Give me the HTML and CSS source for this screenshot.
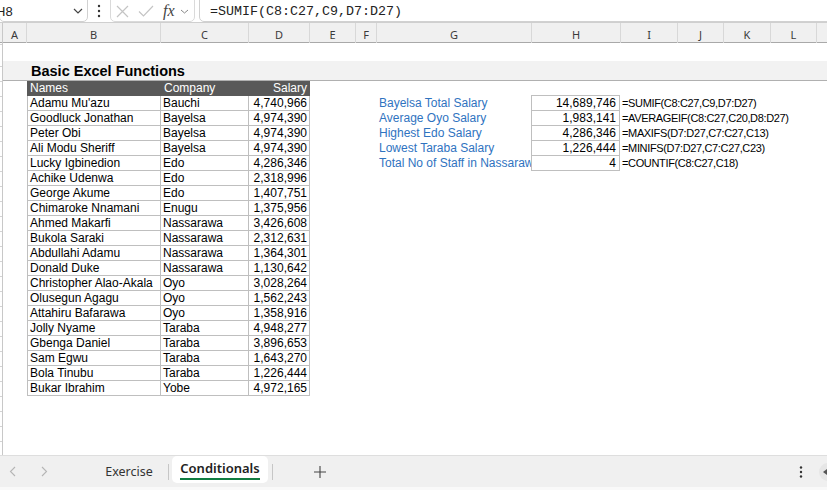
FILE: index.html
```html
<!DOCTYPE html>
<html>
<head>
<meta charset="utf-8">
<title>Conditionals</title>
<link rel="stylesheet" href="styles.css">
</head>
<body>
<div class="app">
  <div class="fbar">
    <div class="namebox">
      <span class="ref">H8</span>
      <svg class="chev" width="10" height="6" viewBox="0 0 10 6"><path d="M1 1 L5 5 L9 1" fill="none" stroke="#444" stroke-width="1.2"/></svg>
    </div>
    <div class="kebab">
      <svg width="4" height="14" viewBox="0 0 4 14"><circle cx="2" cy="2" r="1.2" fill="#333"/><circle cx="2" cy="7" r="1.2" fill="#333"/><circle cx="2" cy="12" r="1.2" fill="#333"/></svg>
    </div>
    <div class="fbtns">
      <svg width="13" height="13" viewBox="0 0 13 13"><path d="M1 1 L12 12 M12 1 L1 12" stroke="#c4c4c4" stroke-width="1.2" fill="none"/></svg>
      <svg width="16" height="12" viewBox="0 0 16 12"><path d="M1 6.5 L5.5 11 L15 1" stroke="#c4c4c4" stroke-width="1.2" fill="none"/></svg>
      <span class="fx">fx</span>
      <svg width="9" height="5" viewBox="0 0 9 5"><path d="M1 1 L4.5 4 L8 1" fill="none" stroke="#888" stroke-width="1"/></svg>
    </div>
    <div class="formula">=SUMIF(C8:C27,C9,D7:D27)</div>
  </div>

  <div class="colhdr">
    <div class="ch corner"></div>
    <div class="ch">A</div>
    <div class="ch">B</div>
    <div class="ch">C</div>
    <div class="ch">D</div>
    <div class="ch">E</div>
    <div class="ch">F</div>
    <div class="ch">G</div>
    <div class="ch">H</div>
    <div class="ch">I</div>
    <div class="ch">J</div>
    <div class="ch">K</div>
    <div class="ch">L</div>
    <div class="ch last"></div>
  </div>

  <div class="sheet">
    <div class="rowhdr"></div>
    <div class="cells">
      <div class="spacer"></div>
      <div class="titleband">Basic Excel Functions</div>
      <div class="content">
        <div class="tbl">
          <div class="h">Names</div><div class="h">Company</div><div class="h num">Salary</div>
          <div class="c n">Adamu Mu'azu</div><div class="c">Bauchi</div><div class="c num">4,740,966</div>
          <div class="c n">Goodluck Jonathan</div><div class="c">Bayelsa</div><div class="c num">4,974,390</div>
          <div class="c n">Peter Obi</div><div class="c">Bayelsa</div><div class="c num">4,974,390</div>
          <div class="c n">Ali Modu Sheriff</div><div class="c">Bayelsa</div><div class="c num">4,974,390</div>
          <div class="c n">Lucky Igbinedion</div><div class="c">Edo</div><div class="c num">4,286,346</div>
          <div class="c n">Achike Udenwa</div><div class="c">Edo</div><div class="c num">2,318,996</div>
          <div class="c n">George Akume</div><div class="c">Edo</div><div class="c num">1,407,751</div>
          <div class="c n">Chimaroke Nnamani</div><div class="c">Enugu</div><div class="c num">1,375,956</div>
          <div class="c n">Ahmed Makarfi</div><div class="c">Nassarawa</div><div class="c num">3,426,608</div>
          <div class="c n">Bukola Saraki</div><div class="c">Nassarawa</div><div class="c num">2,312,631</div>
          <div class="c n">Abdullahi Adamu</div><div class="c">Nassarawa</div><div class="c num">1,364,301</div>
          <div class="c n">Donald Duke</div><div class="c">Nassarawa</div><div class="c num">1,130,642</div>
          <div class="c n">Christopher Alao-Akala</div><div class="c">Oyo</div><div class="c num">3,028,264</div>
          <div class="c n">Olusegun Agagu</div><div class="c">Oyo</div><div class="c num">1,562,243</div>
          <div class="c n">Attahiru Bafarawa</div><div class="c">Oyo</div><div class="c num">1,358,916</div>
          <div class="c n">Jolly Nyame</div><div class="c">Taraba</div><div class="c num">4,948,277</div>
          <div class="c n">Gbenga Daniel</div><div class="c">Taraba</div><div class="c num">3,896,653</div>
          <div class="c n">Sam Egwu</div><div class="c">Taraba</div><div class="c num">1,643,270</div>
          <div class="c n">Bola Tinubu</div><div class="c">Taraba</div><div class="c num">1,226,444</div>
          <div class="c n">Bukar Ibrahim</div><div class="c">Yobe</div><div class="c num">4,972,165</div>
        </div>

        <div class="summary">
          <div class="lbl first">Bayelsa Total Salary</div><div class="val first">14,689,746</div><div class="fml first">=SUMIF(C8:C27,C9,D7:D27)</div>
          <div class="lbl">Average Oyo Salary</div><div class="val">1,983,141</div><div class="fml">=AVERAGEIF(C8:C27,C20,D8:D27)</div>
          <div class="lbl">Highest Edo Salary</div><div class="val">4,286,346</div><div class="fml">=MAXIFS(D7:D27,C7:C27,C13)</div>
          <div class="lbl">Lowest Taraba Salary</div><div class="val">1,226,444</div><div class="fml">=MINIFS(D7:D27,C7:C27,C23)</div>
          <div class="lbl">Total No of Staff in Nassarawa</div><div class="val">4</div><div class="fml">=COUNTIF(C8:C27,C18)</div>
        </div>
      </div>
    </div>
  </div>

  <div class="tabs">
    <svg class="nav prev" width="7" height="11" viewBox="0 0 7 11"><path d="M6 1 L1.5 5.5 L6 10" fill="none" stroke="#b5b5b5" stroke-width="1.1"/></svg>
    <svg class="nav next" width="7" height="11" viewBox="0 0 7 11"><path d="M1 1 L5.5 5.5 L1 10" fill="none" stroke="#b5b5b5" stroke-width="1.1"/></svg>
    <div class="tab">Exercise</div>
    <div class="sep"></div>
    <div class="tab active"><span>Conditionals</span><i class="uline"></i></div>
    <div class="sep sep2"></div>
    <svg class="plus" width="12" height="12" viewBox="0 0 12 12"><path d="M6 0 V12 M0 6 H12" stroke="#444" stroke-width="1.1"/></svg>
    <svg class="more" width="4" height="12" viewBox="0 0 4 12"><circle cx="2" cy="1.5" r="1.2" fill="#333"/><circle cx="2" cy="6" r="1.2" fill="#333"/><circle cx="2" cy="10.5" r="1.2" fill="#333"/></svg>
    <svg class="scroll" width="18" height="18" viewBox="0 0 18 18"><circle cx="9" cy="9" r="9" fill="#e6e6e6"/><path d="M4 9 L8 6 L8 12 Z" fill="#555"/></svg>
  </div>
  <div class="foot"></div>
</div>
</body>
</html>
```

FILE: styles.css
```css
html, body {
  margin: 0;
  padding: 0;
  background: #fff;
}
body {
  font-family: "Liberation Sans", Arial, sans-serif;
  color: #000;
}
.app {
  width: 827px;
  height: 490px;
  display: flex;
  flex-direction: column;
  overflow: hidden;
}

/* formula bar */
.fbar {
  height: 22px;
  flex: none;
  display: flex;
  align-items: flex-end;
  overflow: hidden;
  background: #fff;
}
.namebox {
  flex: none;
  width: 89px;
  height: 30px;
  margin-left: -1px;
  box-sizing: border-box;
  border: 1px solid #d1d1d1;
  border-radius: 5px;
  display: flex;
  align-items: center;
  justify-content: space-between;
  padding: 8px 4px 0 0;
}
.ref {
  margin-left: -4px;
  font-size: 13px;
  color: #222;
}
.kebab {
  flex: none;
  width: 22px;
  height: 22px;
  display: flex;
  align-items: center;
  justify-content: center;
}
.fbtns {
  flex: none;
  width: 85px;
  height: 30px;
  box-sizing: border-box;
  border: 1px solid #dadada;
  border-radius: 5px;
  display: flex;
  align-items: center;
  padding: 8px 0 0 5px;
}
.fbtns svg:nth-child(1) { margin-right: 9px; }
.fbtns svg:nth-child(2) { margin-right: 9px; }
.fx {
  font-family: "Liberation Serif", "Times New Roman", serif;
  font-style: italic;
  font-size: 16px;
  color: #444;
  margin-right: 5px;
  line-height: 14px;
}
.formula {
  flex: 1;
  margin-left: 4px;
  margin-right: -10px;
  height: 30px;
  box-sizing: border-box;
  border: 1px solid #d1d1d1;
  border-radius: 5px;
  padding: 8px 0 0 10px;
  display: flex;
  align-items: center;
  font-family: "Liberation Mono", "DejaVu Sans Mono", monospace;
  font-size: 13.33px;
  color: #222;
  white-space: nowrap;
}

/* column header */
.colhdr {
  flex: none;
  height: 21px;
  box-sizing: border-box;
  border-top: 1px solid #cfcfcf;
  border-bottom: 1px solid #a9a9a9;
  background: #f0f0f0;
  display: grid;
  grid-template-columns: 3px 24px 134px 88px 61px 46px 21px 155px 89px 57px 46px 47px 46px 1fr;
}
.ch {
  box-sizing: border-box;
  border-right: 1px solid #d8d8d8;
  text-align: center;
  font-family: "Noto Sans", "Open Sans", sans-serif;
  font-size: 11px;
  line-height: 19px;
  padding-top: 2px;
  color: #3a3a3a;
}
.ch.corner { border-right: 1px solid #c8c8c8; }
.ch.last { border-right: none; }

/* sheet */
.sheet {
  flex: 1;
  display: flex;
  min-height: 0;
  background: #fff;
}
.rowhdr {
  flex: none;
  width: 2px;
  border-right: 1px solid #c8c8c8;
  background: repeating-linear-gradient(to bottom, transparent 0 14px, #d4d4d4 14px 15px);
  background-position: 0 9px;
}
.cells {
  flex: 1;
  min-width: 0;
  overflow: hidden;
}
.spacer { height: 18px; }
.titleband {
  height: 19px;
  background: #f2f2f2;
  border-bottom: 1px solid #b0b0b0;
  padding-left: 28px;
  font-weight: bold;
  font-size: 14.5px;
  line-height: 21px;
  color: #000;
}
.content {
  display: flex;
  align-items: flex-start;
}

/* main table */
.tbl {
  margin-left: 24px;
  display: grid;
  grid-template-columns: 134px 88px 61px;
  grid-auto-rows: 15px;
  font-size: 12px;
}
.h {
  background: #595959;
  color: #fff;
  line-height: 15px;
  padding: 0 3px;
  white-space: nowrap;
}
.c {
  box-sizing: border-box;
  border-right: 1px solid #bfbfbf;
  border-bottom: 1px solid #bfbfbf;
  line-height: 14px;
  padding: 0 2px;
  white-space: nowrap;
  overflow: hidden;
}
.c.n { border-left: 1px solid #bfbfbf; }
.num { text-align: right; }

/* summary block */
.summary {
  margin-left: 67px;
  padding-top: 14px;
  display: grid;
  grid-template-columns: 154px 89px auto;
  grid-template-rows: 16px repeat(4, 15px);
  font-size: 12px;
}
.lbl {
  color: #2f73bf;
  line-height: 14px;
  padding-left: 2px;
  white-space: nowrap;
  overflow: hidden;
}
.lbl.first, .fml.first { padding-top: 1px; }
.val {
  box-sizing: border-box;
  border-left: 1px solid #bfbfbf;
  border-right: 1px solid #bfbfbf;
  border-bottom: 1px solid #bfbfbf;
  text-align: right;
  padding-right: 3px;
  line-height: 14px;
}
.val.first { border-top: 1px solid #bfbfbf; }
.fml {
  padding-left: 2px;
  font-size: 11px;
  letter-spacing: -0.35px;
  line-height: 14px;
  white-space: nowrap;
}

/* sheet tabs */
.tabs {
  flex: none;
  height: 32px;
  box-sizing: border-box;
  border-top: 1px solid #dedede;
  background: #f0f0f0;
  display: flex;
  align-items: center;
  padding-left: 9px;
  overflow: hidden;
  font-family: "Noto Sans", "Open Sans", sans-serif;
}
.nav { flex: none; }
.nav.next { margin-left: 25px; }
.tab {
  flex: none;
  width: 78px;
  margin-left: 42px;
  text-align: center;
  font-size: 12.5px;
  color: #333;
  line-height: 16px;
}
.sep {
  flex: none;
  width: 1px;
  height: 16px;
  background: #c6c6c6;
}
.tab.active {
  align-self: flex-start;
  width: 96px;
  height: 27px;
  margin-left: 3px;
  box-sizing: border-box;
  background: #fff;
  border-radius: 5px;
  padding-top: 4px;
  display: flex;
  flex-direction: column;
  align-items: center;
  font-size: 13px;
  font-weight: 600;
  color: #222;
}
.uline {
  display: block;
  width: 80px;
  height: 2px;
  margin-top: 2px;
  background: #107c41;
}
.sep2 { margin-left: 4px; }
.plus { flex: none; margin-left: 41px; }
.more { flex: none; margin-left: auto; }
.scroll { flex: none; margin-left: 16px; margin-right: -10px; }
.foot {
  flex: none;
  height: 3px;
  background: #f9f9f9;
}
```
